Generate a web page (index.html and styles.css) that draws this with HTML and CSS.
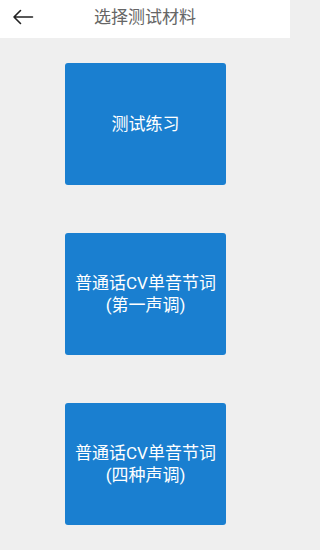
FILE: index.html
```html
<!DOCTYPE html>
<html lang="zh">
<head>
<meta charset="utf-8">
<link rel="stylesheet" href="styles.css">
</head>
<body>
<div class="header">
  <svg class="back" width="22" height="16" viewBox="0 0 22 16"><path d="M20.5 8H2M8.5 1.5L2 8l6.5 6.5" fill="none" stroke="#222" stroke-width="1.6" stroke-linecap="round" stroke-linejoin="round"/></svg>
  <div class="title">选择测试材料</div>
</div>
<div class="list">
  <div class="card"><span class="line">测试练习</span></div>
  <div class="card"><span class="line">普通话CV单音节词</span><span class="line">(第一声调)</span></div>
  <div class="card"><span class="line">普通话CV单音节词</span><span class="line">(四种声调)</span></div>
</div>
</body>
</html>
```
FILE: styles.css
```css
html, body { margin: 0; padding: 0; }
body {
  width: 290px;
  height: 550px;
  background: #efefef;
  font-family: Roboto, "Noto Sans CJK SC", sans-serif;
  overflow: hidden;
}
.header {
  height: 38px;
  background: #fff;
  position: relative;
  display: flex;
  align-items: center;
  justify-content: center;
}
.back {
  position: absolute;
  left: 12px;
  top: 9px;
}
.title {
  font-size: 17px;
  line-height: 20px;
  color: #666;
  margin-top: -4px;
}
.list {
  display: flex;
  flex-direction: column;
  align-items: center;
  padding-top: 25px;
  gap: 48px;
  padding-left: 1px;
}
.card {
  width: 161px;
  height: 122px;
  background: #1a7fd0;
  border-radius: 3px;
  color: #fff;
  font-size: 17px;
  line-height: 22px;
  display: flex;
  flex-direction: column;
  align-items: center;
  justify-content: center;
  text-align: center;
}
.line {
  display: block;
  white-space: nowrap;
}
```
